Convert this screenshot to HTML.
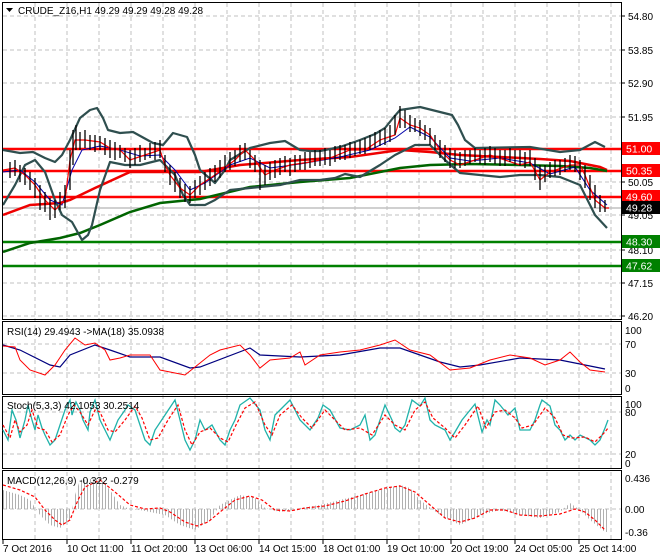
<!DOCTYPE html>
<html><head><meta charset="utf-8"><style>
html,body{margin:0;padding:0;background:#fff;}
svg{display:block;font-family:"Liberation Sans",sans-serif;}
</style></head><body>
<svg width="660" height="560" viewBox="0 0 660 560" xmlns="http://www.w3.org/2000/svg">
<defs>
<pattern id="vl" width="3" height="10" patternUnits="userSpaceOnUse"><rect x="0" y="0" width="1" height="10" fill="#b0b0b0"/></pattern>
<clipPath id="cm"><rect x="3" y="3" width="618" height="316"/></clipPath>
</defs>
<rect width="660" height="560" fill="#fff"/>
<g stroke="#c0c0c0" stroke-dasharray="4,3" stroke-width="1">
<path d="M35 3V540M67 3V540M99 3V540M131 3V540M163 3V540M195 3V540M227 3V540M259 3V540M291 3V540M323 3V540M355 3V540M387 3V540M419 3V540M451 3V540M483 3V540M515 3V540M547 3V540M579 3V540M611 3V540"/>
<path d="M3 16H621M3 50H621M3 83H621M3 117H621M3 149H621M3 182H621M3 215H621M3 250H621M3 283H621M3 316H621"/>
<path d="M3 344H621M3 373H621M3 412H621M3 454H621M3 509H621"/>
</g>
<g fill="none" stroke="#000" stroke-width="1">
<rect x="2.5" y="2.5" width="619" height="317"/>
<rect x="2.5" y="321.5" width="619" height="73"/>
<rect x="2.5" y="396.5" width="619" height="72"/>
<rect x="2.5" y="470.5" width="619" height="69"/>
</g>
<g clip-path="url(#cm)">
<path d="M3 208H621" stroke="#c0c0c0" stroke-width="1.5"/>
<path d="M3 149H621M3 171H621M3 197H621" stroke="#f00" stroke-width="2.5"/>
<path d="M3 242H621M3 266H621" stroke="#008000" stroke-width="2.5"/>
<polyline fill="none" stroke="#e00" stroke-width="2.5" points="3,215 30,205 60,203 70,200 95,188 130,172 165,172 200,172 240,165 300,160 350,157 400,150 430,152 460,155 500,157 540,159 570,161 600,167 607,170"/>
<polyline fill="none" stroke="#006400" stroke-width="2.5" points="3,252 30,243 60,238 80,233 100,225 130,212 160,203 200,199 250,187 300,182 350,178 400,168 430,165 470,164 520,165 560,166 590,168 607,171"/>
<polyline fill="none" stroke="#2f4f4f" stroke-width="2.2" stroke-linejoin="round" points="3,150 20,153 33,152 45,158 55,162 62,155 70,140 80,118 90,110 97,108 103,118 108,130 120,133 133,132 153,143 163,145 173,133 187,137 195,155 200,170 215,183 225,170 230,160 250,148 270,143 285,141 300,150 310,151 320,151 340,147 360,140 375,134 385,128 393,118 400,110 420,107 440,112 452,115 458,125 465,140 475,148 530,147 560,152 580,150 595,142 605,147"/>
<polyline fill="none" stroke="#2f4f4f" stroke-width="2.2" stroke-linejoin="round" points="3,205 15,185 25,165 35,160 45,172 55,200 62,215 72,222 82,240 88,235 92,225 100,190 110,162 125,165 140,165 160,160 175,175 183,195 190,205 205,205 215,200 230,190 260,187 280,185 300,180 320,180 335,178 345,174 360,177 380,165 395,155 415,145 430,145 445,160 460,173 480,175 500,177 520,175 540,175 560,177 580,185 595,215 607,228"/>
<polyline fill="none" stroke="#00a" stroke-width="1" points="3,172 20,170 35,182 50,200 62,205 72,170 82,150 100,146 120,150 140,156 160,155 175,170 190,190 205,183 230,165 250,158 270,168 300,164 340,157 370,150 395,138 410,127 430,137 450,158 470,161 500,158 530,163 550,174 575,167 590,190 607,205"/>
<polyline fill="none" stroke="#f00" stroke-width="1.2" points="3,170 15,168 25,175 35,185 45,200 55,210 65,200 70,160 75,140 85,140 100,142 110,148 120,150 130,160 145,155 160,150 165,165 170,175 180,188 190,195 200,185 215,175 235,160 245,150 255,160 265,175 275,170 290,165 310,162 330,158 350,150 365,150 380,140 395,135 400,118 410,125 420,128 430,135 440,150 450,160 460,165 475,160 490,155 505,160 520,165 530,162 540,180 550,172 570,165 580,165 585,175 595,200 605,208 609,208"/>
<g stroke="#000" stroke-width="1.3">
<path d="M10 162V178M15 160V176M20 165V182M25 168V185M30 172V190M35 178V198M40 185V210M45 192V212M50 198V220M55 200V218M60 192V210M65 185V208M70 150V190M73 130V165M76 125V150M80 132V150M85 130V148M90 135V150M95 135V152M100 136V150M105 138V155M110 140V158M115 142V160M120 145V158M125 148V162M130 150V168M135 148V165M140 145V162M145 148V160M150 143V158M155 142V160M160 140V158M165 155V172M170 165V185M175 172V192M180 178V198M185 184V202M190 186V203M195 180V198M200 176V195M205 172V190M210 168V186M215 165V182M220 160V178M225 155V172M230 152V170M235 150V166M240 145V162M245 143V160M250 150V168M255 155V172M260 160V190M265 165V185M270 162V180M275 160V178M280 158V175M285 156V172M290 158V176M295 155V172M300 155V170M305 152V170M310 152V168M315 150V166M320 150V166M325 148V165M330 150V166M335 146V162M340 145V160M345 145V160M350 142V158M355 142V156M360 140V154M365 138V154M370 135V150M375 132V148M380 130V146M385 128V145M390 125V142M395 115V135M400 106V128M405 110V128M410 115V132M415 118V132M420 120V136M425 125V140M430 128V145M435 135V150M440 140V158M445 145V162M450 148V168M455 150V168M460 152V168M465 150V166M470 150V164M475 148V162M480 150V164M485 148V165M490 146V162M495 148V164M500 150V166M505 150V166M510 148V162M515 150V165M520 150V166M525 152V168M530 150V166M535 158V180M540 165V190M545 165V182M550 162V178M555 160V176M560 160V175M565 158V172M570 155V170M575 156V172M580 160V180M585 165V188M590 175V200M595 185V208M600 195V212M605 200V212"/>
</g>
</g>
<g font-size="10" fill="#000">
<path d="M621 16h4M621 50h4M621 83h4M621 117h4M621 182h4M621 215h4M621 250h4M621 283h4M621 316h4" stroke="#000"/>
<text x="628" y="20">54.80</text><text x="628" y="54">53.85</text><text x="628" y="87">52.90</text><text x="628" y="121">51.95</text>
<text x="628" y="186">50.05</text><text x="628" y="219">49.05</text><text x="628" y="254">48.10</text><text x="628" y="287">47.15</text><text x="628" y="320">46.20</text>
</g>
<g font-size="10.5" fill="#fff">
<rect x="622" y="142" width="38" height="13" fill="#f00"/><text x="626" y="152.5">51.00</text>
<rect x="622" y="164" width="38" height="13" fill="#f00"/><text x="626" y="174.5">50.35</text>
<rect x="622" y="190" width="38" height="13" fill="#f00"/><text x="626" y="200.5">49.60</text>
<rect x="622" y="201" width="38" height="13" fill="#000"/><text x="626" y="211.5">49.28</text>
<rect x="622" y="235" width="38" height="13" fill="#008000"/><text x="626" y="245.5">48.30</text>
<rect x="622" y="259" width="38" height="13" fill="#008000"/><text x="626" y="269.5">47.62</text>
</g>
<text x="18" y="14" font-size="10" fill="#000">CRUDE_Z16,H1  49.29 49.29 49.28 49.28</text>
<path d="M6 8h7l-3.5 4z" fill="#000"/>
<polyline fill="none" stroke="#00007f" stroke-width="1.2" points="3,345 20,350 50,365 60,367 70,355 95,345 110,350 130,357 160,357 190,368 200,367 250,348 260,355 300,357 340,355 380,348 400,348 440,362 460,367 480,365 520,358 560,360 590,366 605,369"/>
<polyline fill="none" stroke="#f00" stroke-width="1" points="3,346 15,347 20,360 30,370 45,375 55,365 65,350 75,338 85,345 95,343 105,350 110,360 120,358 130,355 150,355 160,370 170,372 185,375 195,367 210,355 220,350 240,345 250,355 260,368 270,360 290,358 300,352 305,365 320,355 340,352 360,350 380,345 395,340 410,350 430,355 450,370 470,368 490,360 510,355 530,358 545,365 560,360 570,352 580,362 590,370 605,372"/>
<text x="7" y="335" font-size="10" fill="#000">RSI(14) 29.4943  -&gt;MA(18) 35.0938</text>
<g font-size="10" fill="#000">
<text x="625" y="334">100</text><text x="625" y="348">70</text><text x="625" y="377">30</text><text x="625" y="392">0</text>
<text x="625" y="408">100</text><text x="625" y="416">80</text><text x="625" y="458">20</text><text x="625" y="467">0</text>
<text x="625" y="482">0.436</text><text x="625" y="513">0.00</text><text x="625" y="536">-0.36</text>
</g>
<polyline fill="none" stroke="#20b2aa" stroke-width="1.3" points="3,430 8,440 12,410 16,420 20,438 25,420 28,405 32,420 35,430 38,415 42,428 45,435 50,445 55,440 60,425 65,410 70,400 72,415 76,402 80,410 83,420 88,430 90,412 95,400 100,420 105,430 110,440 114,430 118,420 125,410 128,405 135,410 140,425 145,440 150,445 155,430 165,415 175,400 180,420 185,440 190,450 195,440 200,420 205,430 212,425 220,440 225,445 230,430 235,420 240,405 250,398 260,410 265,430 270,440 275,415 280,410 290,400 300,420 310,430 318,418 323,405 330,410 340,428 350,430 360,425 365,415 370,440 375,435 385,405 392,420 395,428 400,432 405,425 412,400 420,406 425,398 430,420 435,425 445,430 450,440 455,432 462,420 475,404 482,432 487,420 490,425 495,400 500,405 508,415 515,408 520,430 530,430 535,420 540,405 542,400 550,406 555,425 560,430 565,440 570,435 575,440 580,435 590,440 595,445 600,440 605,428 608,420"/>
<polyline fill="none" stroke="#f00" stroke-width="1.2" stroke-dasharray="3,2" points="3,425 10,438 15,420 20,432 27,425 32,410 38,428 45,430 52,442 60,435 68,415 74,405 80,412 88,425 95,410 100,412 108,430 115,432 125,420 135,406 142,418 150,440 158,438 168,420 178,405 185,430 192,445 200,432 210,428 220,438 228,442 236,425 245,408 255,402 265,425 272,435 280,415 292,405 302,418 312,428 325,410 335,420 345,430 360,428 372,435 385,415 395,425 405,430 415,410 425,402 433,418 445,428 455,438 465,425 478,406 486,428 495,412 505,410 515,418 522,428 533,425 545,408 555,418 563,435 572,438 585,437 595,442 605,432 608,428"/>
<text x="7" y="409" font-size="10" fill="#000">Stoch(5,3,3) 42.1053 30.2514</text>
<polygon fill="url(#vl)" points="3,509 3,490 20,495 30,500 40,515 50,525 60,528 70,520 75,495 80,480 100,478 110,490 120,505 130,509 140,510 165,515 180,525 195,530 210,520 220,505 240,495 255,498 265,508 280,512 300,508 320,505 340,500 360,495 380,490 400,485 410,488 420,500 440,515 460,525 480,515 500,510 520,515 540,518 560,512 570,503 580,510 590,520 605,532 608,532 608,509"/>
<polyline fill="none" stroke="#f00" stroke-width="1.2" stroke-dasharray="3,2" points="3,485 20,490 35,497 45,510 55,520 62,525 70,520 78,500 85,487 100,480 115,492 130,505 145,509 160,508 170,512 185,522 197,526 208,522 220,512 235,500 250,496 262,500 275,510 290,511 305,508 325,506 345,501 365,494 385,488 400,486 415,492 430,505 445,518 460,522 475,518 490,510 505,510 520,515 540,516 560,514 575,509 585,512 595,520 605,530"/>
<text x="7" y="484" font-size="10" fill="#000">MACD(12,26,9) -0.322 -0.279</text>
<g stroke="#000"><path d="M3 540v4M67 540v4M131 540v4M195 540v4M259 540v4M323 540v4M387 540v4M451 540v4M515 540v4M579 540v4"/></g>
<g font-size="10" fill="#000">
<text x="3" y="552">7 Oct 2016</text><text x="67" y="552">10 Oct 11:00</text><text x="131" y="552">11 Oct 20:00</text><text x="195" y="552">13 Oct 06:00</text><text x="259" y="552">14 Oct 15:00</text><text x="323" y="552">18 Oct 01:00</text><text x="387" y="552">19 Oct 10:00</text><text x="451" y="552">20 Oct 19:00</text><text x="515" y="552">24 Oct 05:00</text><text x="579" y="552">25 Oct 14:00</text>
</g>
</svg>
</body></html>
